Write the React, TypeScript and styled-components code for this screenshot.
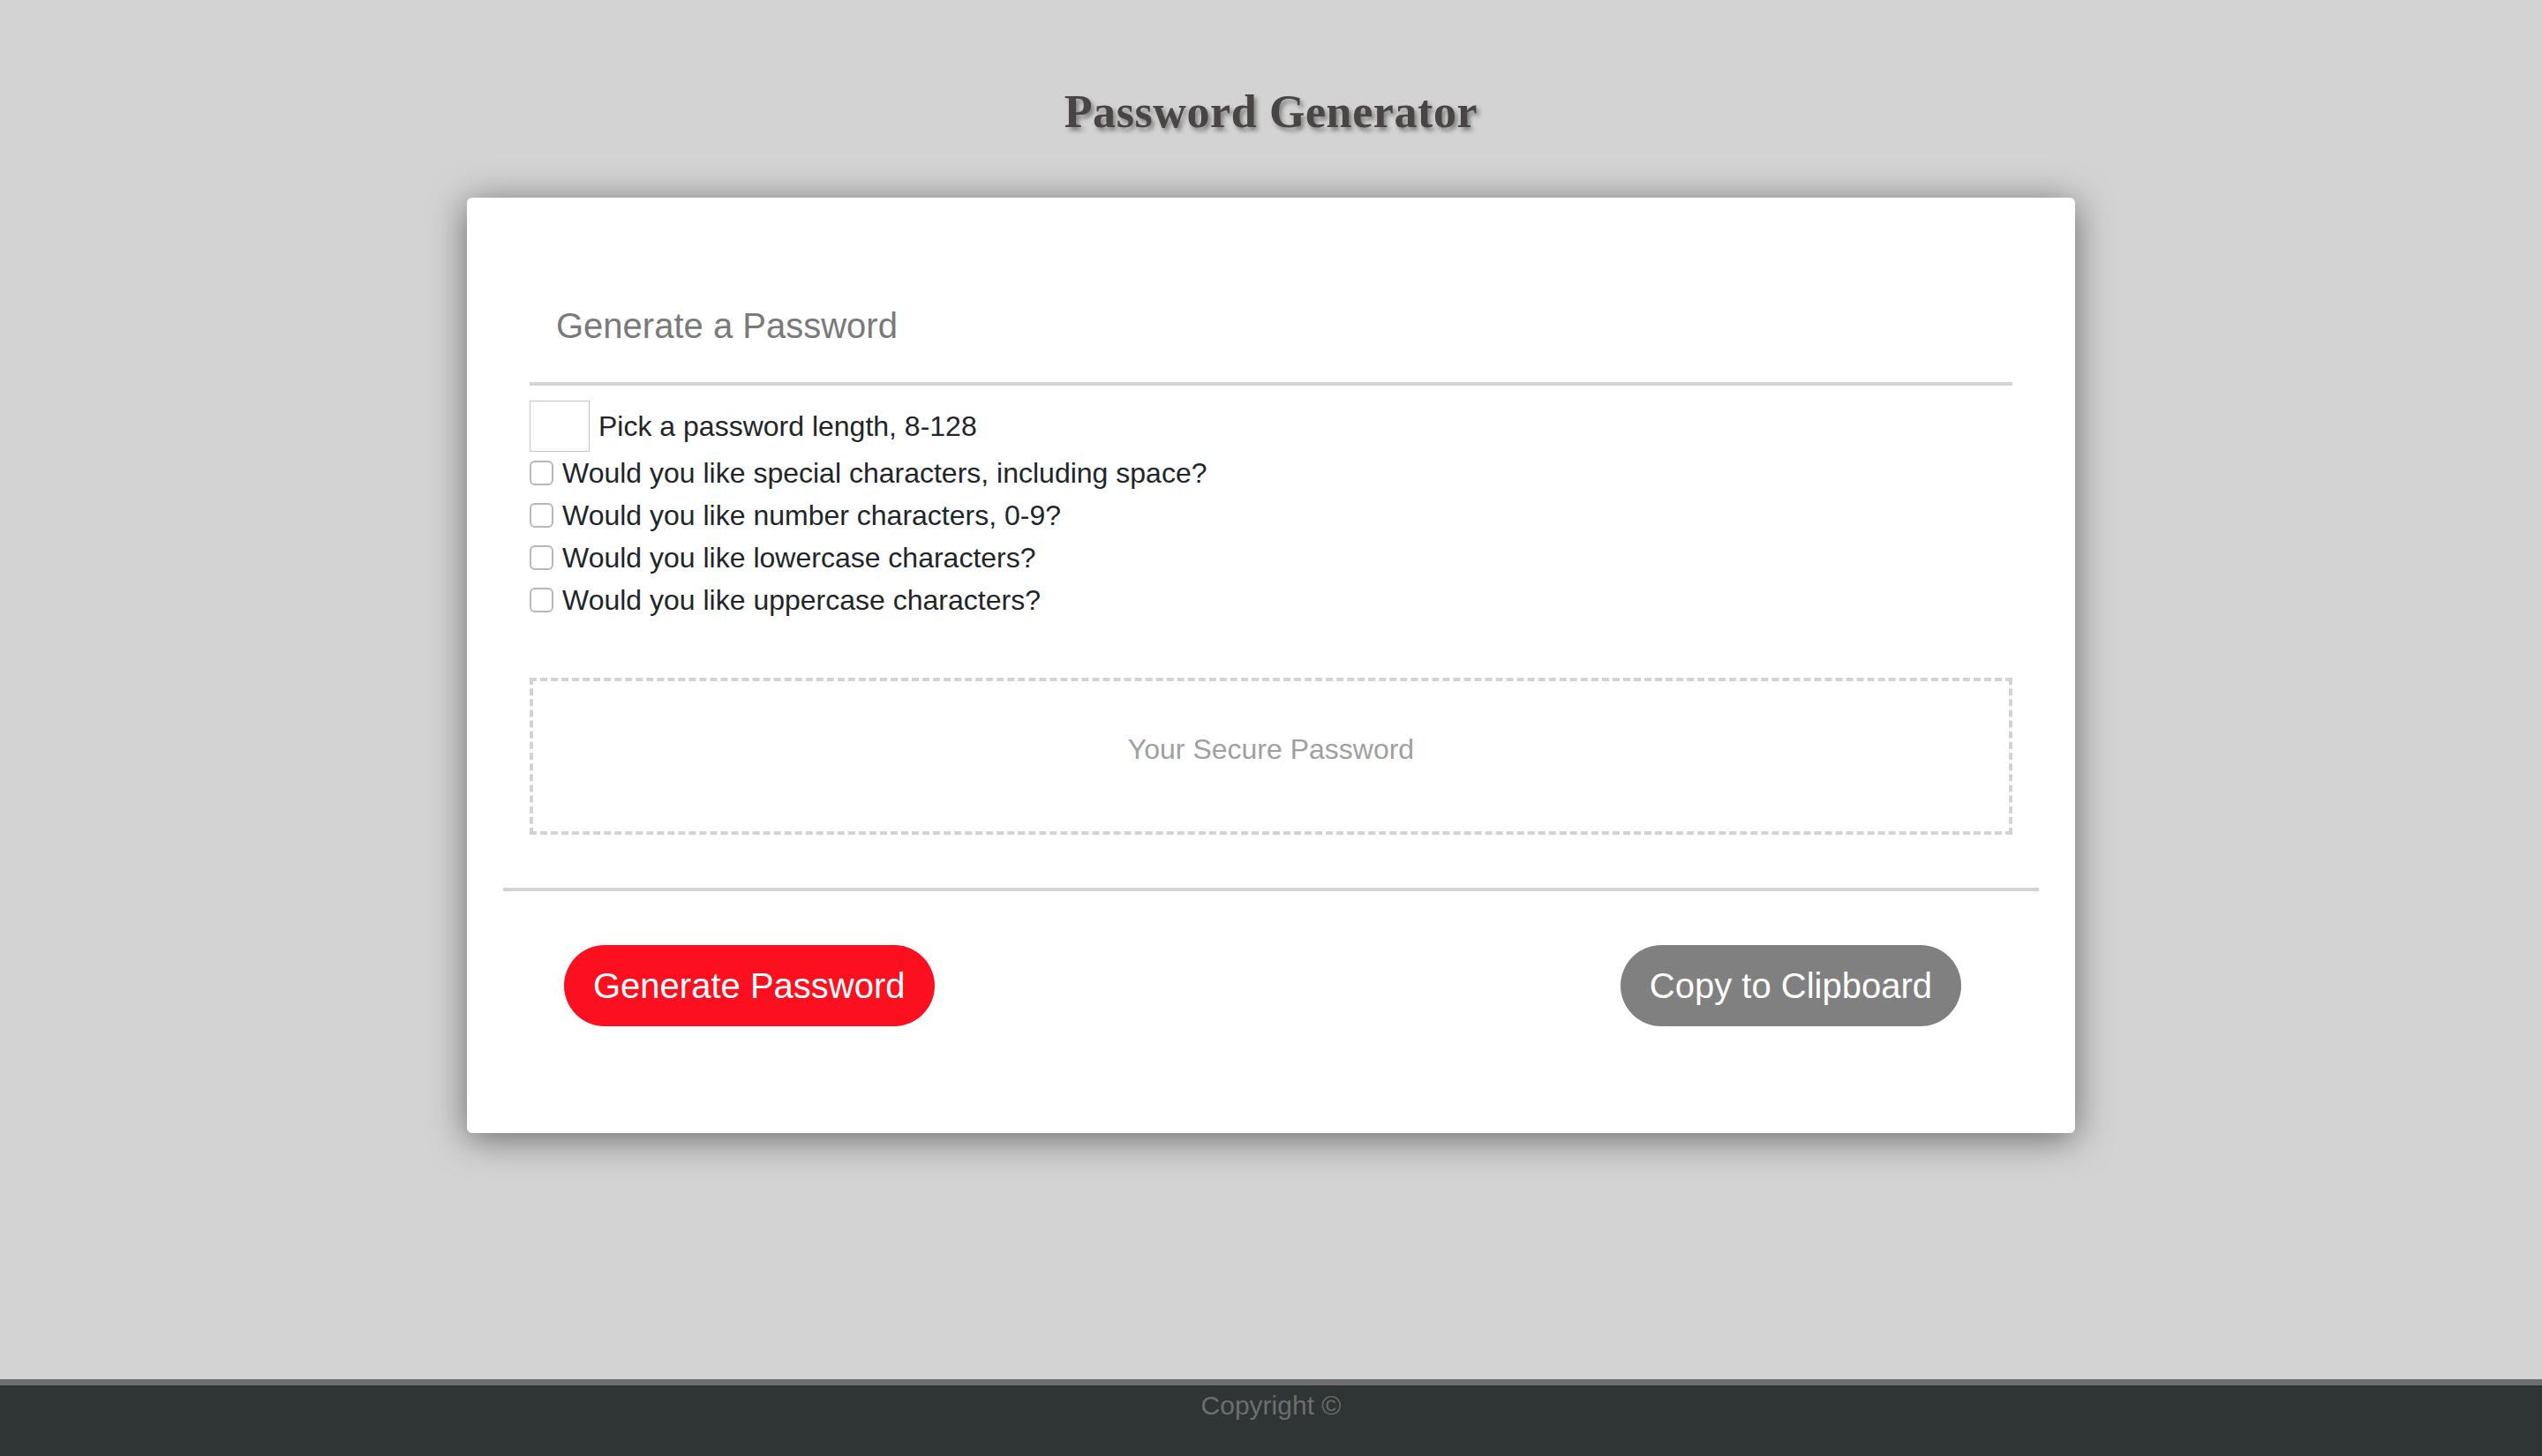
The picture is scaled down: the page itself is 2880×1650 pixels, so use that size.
import React, { useState } from 'react';
import styled, { createGlobalStyle } from 'styled-components';

const GlobalStyle = createGlobalStyle`
  *, *::before, *::after {
    box-sizing: border-box;
  }

  html, body {
    margin: 0;
    padding: 0;
    background: #d3d3d3;
    font-family: "Liberation Sans", Arial, sans-serif;
  }
`;

const options = [
  { id: 'special', label: 'Would you like special characters, including space?' },
  { id: 'numbers', label: 'Would you like number characters, 0-9?' },
  { id: 'lower', label: 'Would you like lowercase characters?' },
  { id: 'upper', label: 'Would you like uppercase characters?' },
];

const App: React.FC = () => {
  const [length, setLength] = useState('');
  const [checked, setChecked] = useState<Record<string, boolean>>({});
  const [password, setPassword] = useState('');

  const toggle = (id: string) => {
    setChecked((prev) => ({ ...prev, [id]: !prev[id] }));
  };

  const generate = () => {
    const n = parseInt(length, 10);
    if (!n || n < 8 || n > 128) return;
    let pool = '';
    if (checked.special) pool += ' !"#$%&\'()*+,-./:;<=>?@[\\]^_`{|}~';
    if (checked.numbers) pool += '0123456789';
    if (checked.lower) pool += 'abcdefghijklmnopqrstuvwxyz';
    if (checked.upper) pool += 'ABCDEFGHIJKLMNOPQRSTUVWXYZ';
    if (!pool) return;
    let out = '';
    for (let i = 0; i < n; i++) {
      out += pool[Math.floor(Math.random() * pool.length)];
    }
    setPassword(out);
  };

  const copy = () => {
    if (password && navigator.clipboard) navigator.clipboard.writeText(password);
  };

  return (
    <Page>
      <GlobalStyle />
      <Header>
        <Title>Password Generator</Title>
      </Header>

      <Card>
        <CardHeader>
          <CardTitle>Generate a Password</CardTitle>
        </CardHeader>

        <Form>
          <LengthRow>
            <LengthInput
              type="text"
              value={length}
              onChange={(e) => setLength(e.target.value)}
            />
            Pick a password length, 8-128
          </LengthRow>
          {options.map((opt) => (
            <CheckRow key={opt.id}>
              <Checkbox
                type="checkbox"
                checked={!!checked[opt.id]}
                onChange={() => toggle(opt.id)}
              />
              {opt.label}
            </CheckRow>
          ))}
        </Form>

        <Output
          readOnly
          value={password}
          placeholder="Your Secure Password"
        />

        <CardFooter>
          <Button $variant="primary" onClick={generate}>
            Generate Password
          </Button>
          <Button $variant="secondary" onClick={copy}>
            Copy to Clipboard
          </Button>
        </CardFooter>
      </Card>

      <Footer>Copyright ©</Footer>
    </Page>
  );
};

const Page = styled.div`
  min-height: 100vh;
  display: flex;
  flex-direction: column;
`;

const Header = styled.header`
  text-align: center;
  padding-top: 101px;
  margin-bottom: 71px;
`;

const Title = styled.h1`
  margin: 0;
  font-family: "Liberation Serif", "Times New Roman", serif;
  font-weight: 700;
  font-size: 52px;
  line-height: 52px;
  letter-spacing: 0.6px;
  color: #4a4545;
  text-shadow: 3px 4px 5px rgba(0, 0, 0, 0.4);
`;

const Card = styled.main`
  width: 1822px;
  margin: 0 auto;
  padding: 121px 71px 0;
  background: #ffffff;
  border-radius: 6px;
  box-shadow: 0 6px 40px rgba(0, 0, 0, 0.5);
`;

const CardHeader = styled.div`
  padding: 0 30px 40px;
  border-bottom: 4px solid #d3d3d3;
`;

const CardTitle = styled.h2`
  margin: 0;
  font-size: 40px;
  line-height: 48px;
  font-weight: 400;
  color: #7a7a7a;
`;

const Form = styled.div`
  margin-top: 17px;
  display: flex;
  flex-direction: column;
  font-size: 32px;
  color: #212529;
`;

const LengthRow = styled.label`
  display: flex;
  align-items: center;
  gap: 10px;
  height: 58px;
`;

const LengthInput = styled.input`
  width: 68px;
  height: 58px;
  border: 1px solid #c4c4c4;
  padding: 0 8px;
  font-size: 28px;
  font-family: inherit;
  outline: none;
`;

const CheckRow = styled.label`
  display: flex;
  align-items: center;
  gap: 10px;
  height: 48px;
`;

const Checkbox = styled.input`
  appearance: none;
  margin: 0;
  width: 27px;
  height: 28px;
  border: 2px solid #b8b8b8;
  border-radius: 6px;
  background: #fff;
  cursor: pointer;

  &:checked {
    background: #1a73e8;
    border-color: #1a73e8;
  }
`;

const Output = styled.textarea`
  display: block;
  width: 100%;
  height: 178px;
  margin-top: 64px;
  padding: 58px 20px 0;
  border: 4px dashed #d3d3d3;
  border-radius: 0;
  resize: none;
  overflow: hidden;
  text-align: center;
  font-family: "Liberation Sans", Arial, sans-serif;
  font-size: 32px;
  line-height: 38px;
  color: #212529;
  outline: none;

  &::placeholder {
    color: #a0a0a0;
  }
`;

const CardFooter = styled.div`
  margin: 60px -30px 0;
  padding: 61px 88px 121px 69px;
  border-top: 4px solid #d3d3d3;
  display: flex;
  justify-content: space-between;
  align-items: center;
`;

const Button = styled.button<{ $variant: 'primary' | 'secondary' }>`
  height: 92px;
  padding: 0 33px;
  border: none;
  border-radius: 46px;
  background: ${({ $variant }) => ($variant === 'primary' ? '#fc0f1e' : '#808080')};
  color: #ffffff;
  font-family: "Liberation Sans", Arial, sans-serif;
  font-size: 40px;
  line-height: 40px;
  cursor: pointer;
`;

const Footer = styled.footer`
  margin-top: auto;
  height: 87px;
  border-top: 7px solid #6e6e6e;
  background: #2f3434;
  color: #6e6e6e;
  text-align: center;
  font-size: 30px;
  line-height: 46px;
`;

export default App;
